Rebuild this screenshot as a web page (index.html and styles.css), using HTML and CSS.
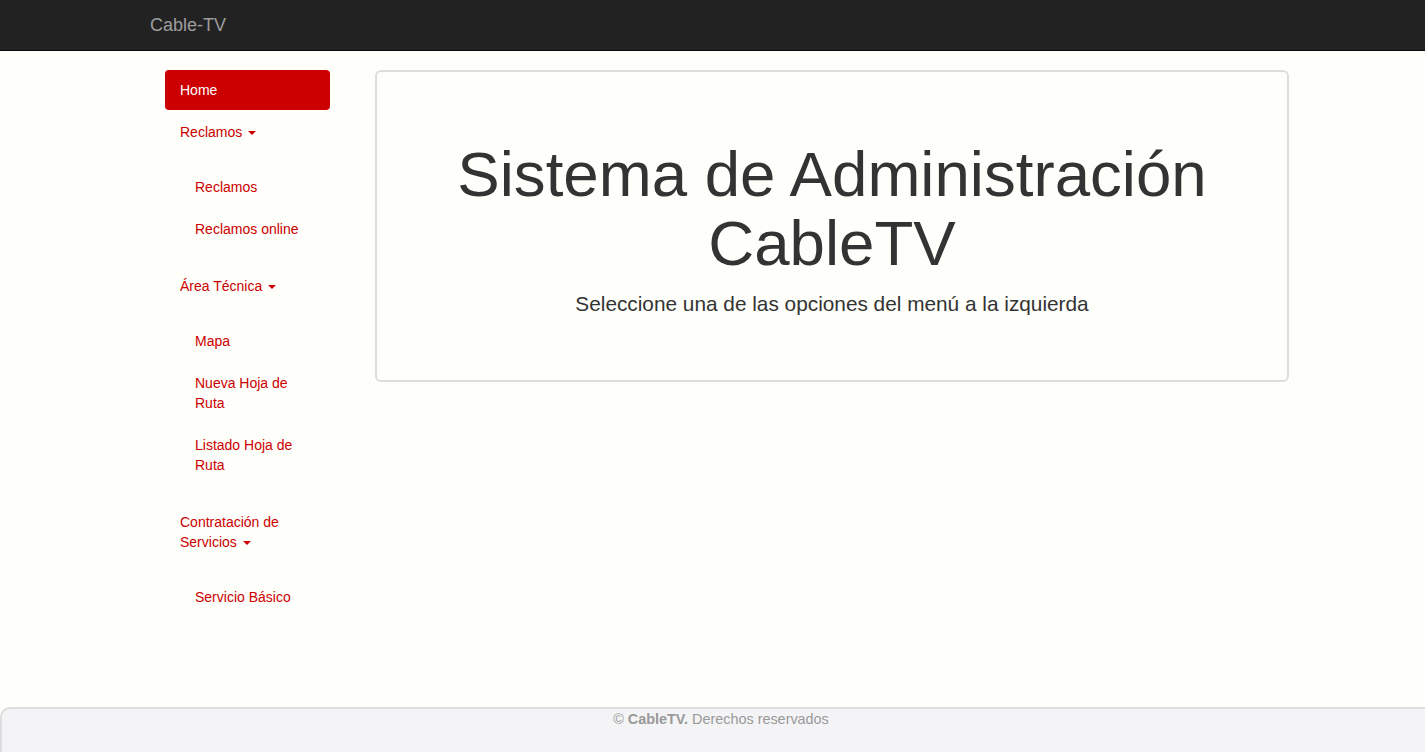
FILE: index.html
```html
<!DOCTYPE html>
<html lang="es">
<head>
<meta charset="utf-8">
<title>Cable-TV</title>
<link rel="stylesheet" href="styles.css">
</head>
<body>
<nav class="navbar">
  <div class="navbar-inner">
    <a class="brand" href="#">Cable-TV</a>
  </div>
</nav>
<div class="page">
  <aside class="sidebar">
    <ul class="nav">
      <li class="active"><a href="#">Home</a></li>
      <li>
        <a href="#">Reclamos <span class="caret"></span></a>
        <ul class="nav sub">
          <li><a href="#">Reclamos</a></li>
          <li><a href="#">Reclamos online</a></li>
        </ul>
      </li>
      <li>
        <a href="#">Área Técnica <span class="caret"></span></a>
        <ul class="nav sub">
          <li><a href="#">Mapa</a></li>
          <li><a href="#">Nueva Hoja de Ruta</a></li>
          <li><a href="#">Listado Hoja de Ruta</a></li>
        </ul>
      </li>
      <li>
        <a href="#">Contratación de Servicios <span class="caret"></span></a>
        <ul class="nav sub">
          <li><a href="#">Servicio Básico</a></li>
        </ul>
      </li>
    </ul>
  </aside>
  <main class="main">
    <div class="jumbotron">
      <h1>Sistema de Administración CableTV</h1>
      <p>Seleccione una de las opciones del menú a la izquierda</p>
    </div>
  </main>
</div>
<footer class="footer">
  <p class="footer-text">© <strong>CableTV.</strong> Derechos reservados</p>
</footer>
</body>
</html>
```
FILE: styles.css
```css
* { box-sizing: border-box; }
html, body { margin: 0; padding: 0; }
body {
  font-family: "Liberation Sans", Arial, Helvetica, sans-serif;
  font-size: 14px;
  line-height: 20px;
  color: #333;
  background: #fefefa;
  min-height: 100vh;
  display: flex;
  flex-direction: column;
}
a { text-decoration: none; }

.navbar {
  height: 51px;
  background: #222;
  border-bottom: 1px solid #080808;
}
.navbar-inner {
  width: 1170px;
  margin: 0 auto;
}
.brand {
  display: inline-block;
  padding: 15px 15px 15px 22.5px;
  font-size: 18px;
  line-height: 20px;
  color: #9d9d9d;
}

.page {
  width: 1170px;
  margin: 0 auto;
  padding: 19px 0 0 37.5px;
  display: grid;
  grid-template-columns: 165px 914px;
  column-gap: 45px;
  align-items: start;
}

.nav {
  list-style: none;
  margin: 0;
  padding: 0;
}
.nav li + li { margin-top: 2px; }
.nav a {
  display: block;
  padding: 10px 15px;
  color: #c00;
  border-radius: 4px;
}
.nav li.active > a {
  background: #c00;
  color: #fff;
}
.nav.sub {
  padding: 15px 0 15px 15px;
}
.caret {
  display: inline-block;
  width: 0;
  height: 0;
  margin-left: 2px;
  vertical-align: middle;
  border-top: 4px solid #c00;
  border-left: 4px solid transparent;
  border-right: 4px solid transparent;
}

.jumbotron {
  border: 2px solid #ddd;
  border-radius: 6px;
  padding: 48px 60px;
  text-align: center;
}
.jumbotron h1 {
  margin: 19px 0 11px;
  font-size: 63.6px;
  line-height: 69.3px;
  font-weight: 500;
  color: #333;
}
.jumbotron p {
  margin: 0 0 13px;
  font-size: 20.8px;
  line-height: 30px;
  color: #333;
}

.footer {
  margin-top: auto;
  height: 45px;
  background: #f4f4f6;
  border-top: 2px solid #ddd;
  border-left: 2px solid #ddd;
  border-top-left-radius: 10px;
}
.footer-text {
  margin: 0;
  padding-left: 15px;
  text-align: center;
  color: #999;
  font-size: 14.4px;
  line-height: 20px;
}
```
